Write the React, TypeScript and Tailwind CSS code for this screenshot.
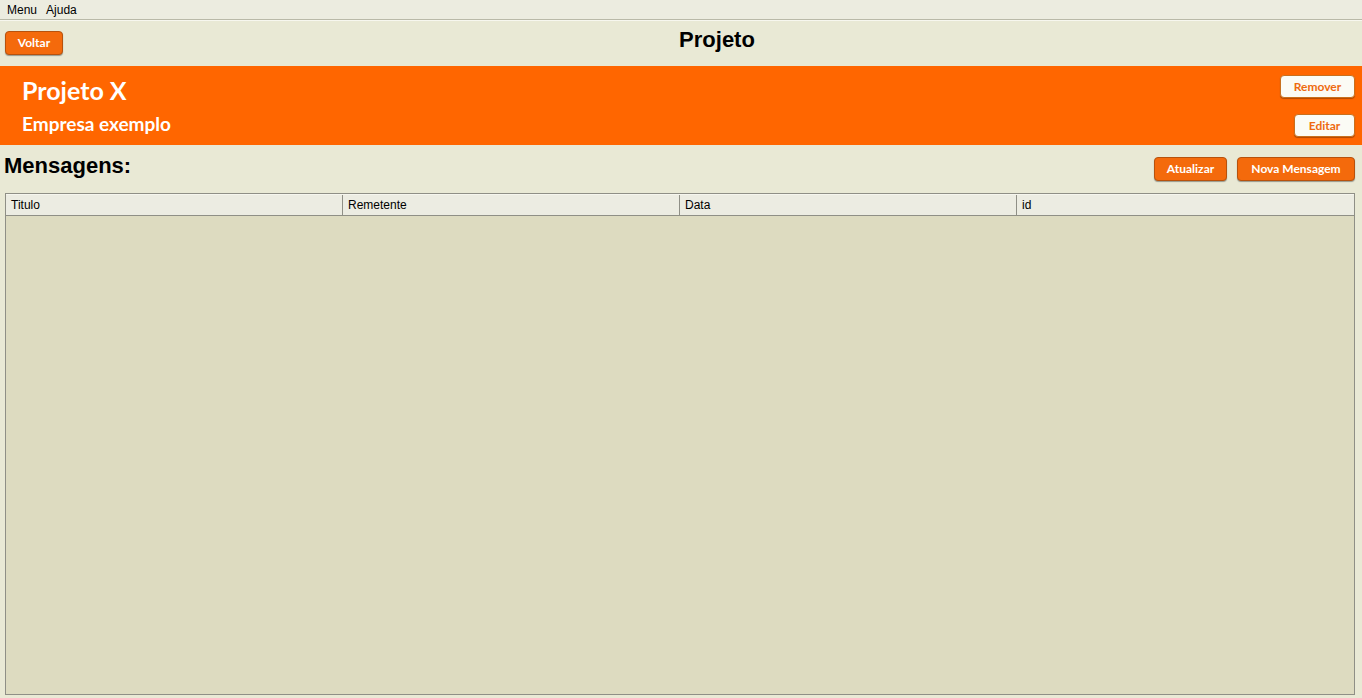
import React from 'react';

const btnOrange =
  "h-[24px] rounded-[4px] bg-[#f46a0c] border border-[#b7520d] text-white text-[12px] font-bold whitespace-nowrap shadow-[0_1px_1px_rgba(0,0,0,0.35)] [font-family:Lato,'Open_Sans',sans-serif]";

const btnWhite =
  "h-[23px] rounded-[4px] bg-[#fbfbf5] border border-[#c8701e] text-[#ee6a10] text-[12px] font-bold whitespace-nowrap shadow-[0_1px_1px_rgba(0,0,0,0.3)] [font-family:Lato,'Open_Sans',sans-serif]";

export default function App() {
  const cols = ['Titulo', 'Remetente', 'Data', 'id'];

  return (
    <div className="w-[1362px] h-[698px] bg-[#e9e9d5] flex flex-col overflow-hidden [font-family:'Liberation_Sans',Arial,sans-serif] text-black">
      {/* menu bar */}
      <div className="h-[20px] flex items-center gap-[9px] px-[7px] text-[12px] bg-[#ecece0] border-b border-[#b9b9a8] shadow-[0_1px_0_#f7f7ef]">
        <span>Menu</span>
        <span>Ajuda</span>
      </div>

      {/* top bar */}
      <div className="h-[46px] relative flex items-center px-[5px]">
        <button className={`${btnOrange} w-[58px] h-[24px] mt-[-1px]`}>Voltar</button>
        <h1 className="absolute left-[72px] right-0 text-center top-[7px] text-[22px] leading-[26px] font-bold pointer-events-none">
          Projeto
        </h1>
      </div>

      {/* project banner */}
      <div className="h-[79px] bg-[#ff6600] flex justify-between px-[22px] pr-[7px]">
        <div className="flex flex-col text-white font-bold [font-family:Lato,'Open_Sans',sans-serif]">
          <span className="text-[25px] leading-[30px] mt-[9px]">Projeto X</span>
          <span className="text-[19px] leading-[22px] mt-[8px]">Empresa exemplo</span>
        </div>
        <div className="flex flex-col items-end pt-[9px] gap-[16px]">
          <button className={`${btnWhite} w-[75px]`}>Remover</button>
          <button className={`${btnWhite} w-[61px]`}>Editar</button>
        </div>
      </div>

      {/* messages header */}
      <div className="h-[48px] flex justify-between px-[4px] pr-[7px]">
        <h2 className="text-[22px] font-bold mt-[8px] leading-[26px]">Mensagens:</h2>
        <div className="flex gap-[10px] mt-[12px]">
          <button className={`${btnOrange} w-[73px]`}>Atualizar</button>
          <button className={`${btnOrange} w-[118px]`}>Nova Mensagem</button>
        </div>
      </div>

      {/* table */}
      <div className="flex-1 mx-[5px] mr-[7px] mb-[3px] border border-[#8f8f86] bg-[#dddbc0] flex flex-col">
        <div className="h-[22px] grid grid-cols-4 bg-[#ecece2] border-b border-[#8f8f86] border-t border-t-[#f6f6ee]">
          {cols.map((c, i) => (
            <div
              key={c}
              className={`flex items-center px-[5px] text-[12px] ${i < 3 ? 'border-r border-[#8f8f86]' : ''}`}
            >
              {c}
            </div>
          ))}
        </div>
        <div className="flex-1" />
      </div>
    </div>
  );
}
